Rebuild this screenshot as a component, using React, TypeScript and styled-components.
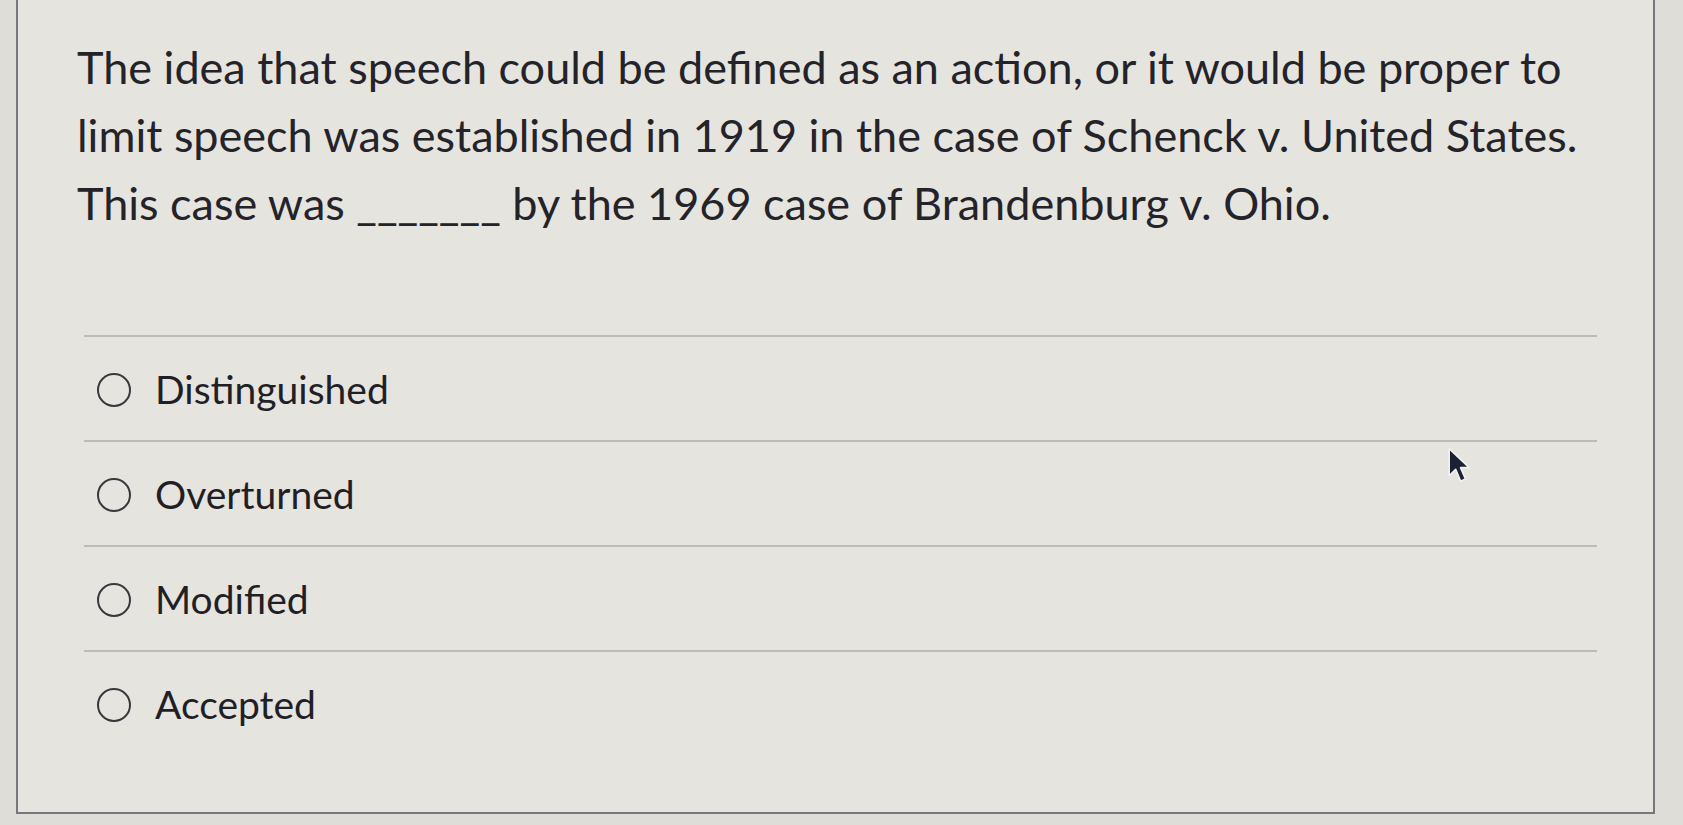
import React, { FC } from "react"
import styled, { createGlobalStyle } from "styled-components"

const GlobalStyle = createGlobalStyle`
  html, body {
    margin: 0;
    padding: 0;
    background: #dfddd8;
    font-family: Lato, "Open Sans", sans-serif;
    color: #232329;
  }
`

type Option = {
  id: string
  label: string
}

const options: Option[] = [
  { id: "a", label: "Distinguished" },
  { id: "b", label: "Overturned" },
  { id: "c", label: "Modified" },
  { id: "d", label: "Accepted" },
]

const Cursor: FC = () => (
  <CursorWrap>
    <svg width="26" height="40" viewBox="0 0 24 36">
      <path
        d="M2 2 L2 27 L8 21 L12.5 32 L17 30 L12.5 19.5 L20.5 19.5 Z"
        fill="#1b2130"
        stroke="#f2f2f2"
        strokeWidth="1.5"
        strokeLinejoin="round"
      />
    </svg>
  </CursorWrap>
)

const App: FC = () => {
  return (
    <>
      <GlobalStyle />
      <Page>
        <Card>
          <Question>
            The idea that speech could be defined as an action, or it would be proper to
            <br />
            limit speech was established in 1919 in the case of Schenck v. United States.
            <br />
            This case was _______ by the 1969 case of Brandenburg v. Ohio.
          </Question>
          <OptionList>
            {options.map(o => (
              <OptionRow key={o.id}>
                <Radio />
                <OptionLabel>{o.label}</OptionLabel>
              </OptionRow>
            ))}
          </OptionList>
          <Cursor />
        </Card>
      </Page>
    </>
  )
}

const Page = styled.div`
  width: 1683px;
  height: 825px;
  overflow: hidden;
  padding-left: 16px;
  box-sizing: border-box;
`

const Card = styled.div`
  position: relative;
  width: 1639px;
  height: 814px;
  box-sizing: border-box;
  background: #e6e4df;
  border: 2px solid #77767b;
  border-top: none;
  padding: 33px 0 0 59px;
`

const Question = styled.p`
  margin: 0;
  white-space: nowrap;
  font-size: 45px;
  line-height: 68px;
`

const OptionList = styled.div`
  margin-top: 98px;
  margin-left: 7px;
  width: 1513px;
  display: flex;
  flex-direction: column;
`

const OptionRow = styled.label`
  display: flex;
  align-items: center;
  gap: 24px;
  height: 105px;
  box-sizing: border-box;
  padding: 2px 0 0 13px;
  border-top: 2px solid #bdbbb6;
  cursor: pointer;
`

const Radio = styled.span`
  flex: none;
  width: 30px;
  height: 30px;
  border-radius: 50%;
  border: 2px solid #38383d;
`

const OptionLabel = styled.span`
  font-size: 39px;
  line-height: 1;
  color: #1f1f25;
`

const CursorWrap = styled.div`
  position: absolute;
  left: 1429px;
  top: 446px;
  line-height: 0;
`

export default App
